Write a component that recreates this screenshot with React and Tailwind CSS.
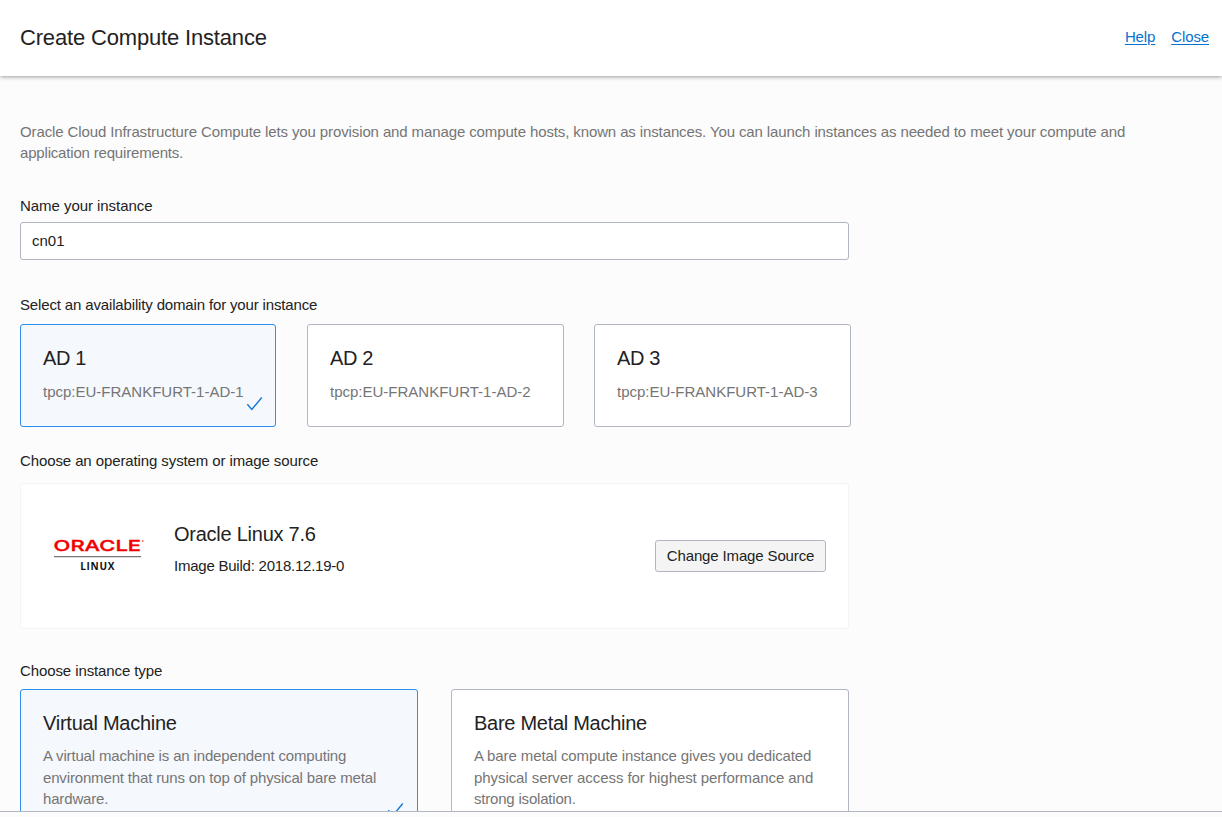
import React from "react";

function Check({ className }) {
  return (
    <svg className={className} width="16" height="15" viewBox="0 0 16 15" fill="none" stroke="#1478d4" strokeWidth="1.4">
      <path d="M0.3 7.2 L4.8 12.5 L14.8 0.5" />
    </svg>
  );
}

function Card({ title, titleClass, text, textClass, selected, className, checkClass }) {
  return (
    <div
      className={`relative shrink-0 rounded-[3px] border px-[22px] ${
        selected ? "border-[#2d8fec] bg-[#f5f8fd]" : "border-[#b0b7c3] bg-white"
      } ${className}`}
    >
      <h2 className={`text-[20px] leading-6 ${titleClass}`}>{title}</h2>
      <p className={`text-[15px] leading-[21.43px] text-[#757575] ${textClass}`}>{text}</p>
      {selected && <Check className={`absolute ${checkClass}`} />}
    </div>
  );
}

function OracleLinuxLogo() {
  return (
    <svg width="92" height="40" viewBox="0 0 92 40" className="shrink-0">
      <text x="0.6" y="15.8" fontFamily="Inter, sans-serif" fontWeight="500" fontSize="15.2" fill="#f00000" stroke="#f00000" strokeWidth="0.35" textLength="87.5" lengthAdjust="spacingAndGlyphs">
        ORACLE
      </text>
      <circle cx="89.8" cy="6" r="0.9" fill="#f66" />
      <path d="M1 21.7H88" stroke="#777" strokeWidth="1.2" />
      <text x="27.3" y="35" fontFamily="Open Sans, sans-serif" fontWeight="700" fontSize="10" fill="#111" textLength="34" lengthAdjust="spacing">
        LINUX
      </text>
    </svg>
  );
}

export default function App() {
  return (
    <div className="flex h-[817px] w-[1222px] flex-col overflow-hidden bg-[#fcfcfc] font-['Liberation_Sans',Arial,sans-serif] text-[15px] leading-[21.43px] text-[#222]">
      <header className="z-10 flex h-[76px] shrink-0 items-center justify-between bg-white pr-[13px] pl-5 shadow-[0_1px_4px_rgba(0,0,0,0.38)]">
        <h1 className="text-[22px] leading-7 tracking-[-0.17px]">Create Compute Instance</h1>
        <nav className="flex gap-4 pb-[2px] tracking-[-0.12px] text-[#0572ce]">
          <a className="underline underline-offset-2">Help</a>
          <a className="underline underline-offset-2">Close</a>
        </nav>
      </header>
      <main className="flex h-[735px] shrink-0 flex-col overflow-hidden px-5 pt-[45px]">
        <p className="h-[43px] w-[1130px] shrink-0 tracking-[-0.117px] text-[#757575]">
          Oracle Cloud Infrastructure Compute lets you provision and manage compute hosts, known as instances. You can
          launch instances as needed to meet your compute and{" "}
          <span className="tracking-[-0.18px]">application requirements.</span>
        </p>
        <label className="mt-[31px] h-[22px] shrink-0 tracking-[-0.05px]">Name your instance</label>
        <input
          className="mt-[5px] h-[38px] w-[829px] shrink-0 rounded-[3px] border border-[#b0b7c3] bg-white px-[11px] pb-[2px] outline-none"
          defaultValue="cn01"
        />
        <div className="mt-[34px] h-[22px] shrink-0 tracking-[-0.15px]">Select an availability domain for your instance</div>
        <div className="mt-[8px] flex shrink-0 gap-[31px]">
          <Card selected title="AD 1" titleClass="tracking-[-0.35px]" text="tpcp:EU-FRANKFURT-1-AD-1" textClass="mt-[11px]" className="h-[103px] w-[256px] pt-[21px]" checkClass="left-[226px] top-[72px]" />
          <Card title="AD 2" titleClass="tracking-[-0.35px]" text="tpcp:EU-FRANKFURT-1-AD-2" textClass="mt-[11px]" className="h-[103px] w-[257px] pt-[21px]" />
          <Card title="AD 3" titleClass="tracking-[-0.35px]" text="tpcp:EU-FRANKFURT-1-AD-3" textClass="mt-[11px]" className="-ml-px h-[103px] w-[257px] pt-[21px]" />
        </div>
        <div className="mt-[23px] h-[22px] shrink-0 tracking-[-0.105px]">Choose an operating system or image source</div>
        <section className="mt-[11px] flex h-[146px] w-[829px] shrink-0 rounded-[3px] border border-[#f4f4f4] bg-white pr-[22px] pl-8">
          <div className="mt-[51px]">
            <OracleLinuxLogo />
          </div>
          <div className="mt-[38px] ml-[29px] flex-1">
            <h2 className="text-[20px] leading-6 tracking-[-0.25px]">Oracle Linux 7.6</h2>
            <p className="mt-[9px] tracking-[-0.23px]">Image Build: 2018.12.19-0</p>
          </div>
          <button className="mt-[56px] h-8 w-[171px] rounded-[3px] border border-[#b0b7c3] bg-[#f4f4f4] tracking-[-0.14px]">
            Change Image Source
          </button>
        </section>
        <div className="mt-[31px] h-[22px] shrink-0 tracking-[-0.1px]">Choose instance type</div>
        <div className="mt-[7px] flex shrink-0 gap-[33px]">
          <Card
            selected
            title="Virtual Machine"
            titleClass="tracking-[-0.25px]"
            text="A virtual machine is an independent computing environment that runs on top of physical bare metal hardware."
            textClass="mt-[10.4px] tracking-[-0.155px]"
            className="h-[150px] w-[398px] pt-[21px]"
            checkClass="left-[367px] top-[113px]"
          />
          <Card
            title="Bare Metal Machine"
            titleClass="tracking-[-0.28px]"
            text={
              <>
                <span className="tracking-[-0.11px]">A bare metal compute instance gives you dedicated </span>
                <span className="tracking-[-0.07px]">physical server access for highest performance and </span>
                <span className="tracking-[-0.2px]">strong isolation.</span>
              </>
            }
            textClass="mt-[10.4px]"
            className="h-[150px] w-[398px] pt-[21px]"
          />
        </div>
      </main>
      <footer className="h-[6px] shrink-0 border-t border-[#b0b7c3] bg-[#fcfcfc]" />
    </div>
  );
}
